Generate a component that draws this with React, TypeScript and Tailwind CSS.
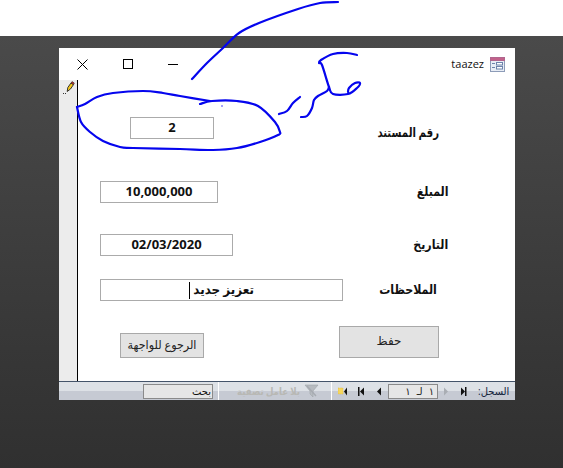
const FONT = "font-['Open_Sans','DejaVu_Sans',sans-serif]"

type Point = [number, number]

// catmull-rom through the hand-read points, keeps the marker strokes soft
const smooth = (pts: Point[]) => {
  let d = `M${pts[0][0]} ${pts[0][1]}`
  for (let i = 0; i < pts.length - 1; i++) {
    const p0 = pts[i - 1] || pts[i]
    const p1 = pts[i]
    const p2 = pts[i + 1]
    const p3 = pts[i + 2] || p2
    const c1x = p1[0] + (p2[0] - p0[0]) / 6
    const c1y = p1[1] + (p2[1] - p0[1]) / 6
    const c2x = p2[0] - (p3[0] - p1[0]) / 6
    const c2y = p2[1] - (p3[1] - p1[1]) / 6
    d += ` C${c1x} ${c1y} ${c2x} ${c2y} ${p2[0]} ${p2[1]}`
  }
  return d
}

const strokes: Point[][] = [
  [[192, 79], [207, 63], [223, 48], [239, 33], [259, 23], [298, 9], [320, 3], [338, 2]],
  [[77, 107], [85, 104], [97, 97], [113, 93], [143, 91], [163, 93], [180, 96], [210, 101]],
  [[200, 104], [212, 101], [237, 101], [258, 106], [275, 122], [280, 132], [278, 135], [260, 142], [237, 148], [213, 150], [180, 149], [133, 148], [120, 147], [103, 141], [90, 132], [81, 122], [77, 107]],
  [[357, 55], [347, 53], [333, 54], [321, 60], [319, 63], [322, 65], [329, 87], [333, 94], [348, 94], [357, 88], [360, 83], [355, 83], [349, 88], [348, 92]],
  [[329, 87], [327, 91], [318, 96], [314, 100], [312, 108], [307, 116], [301, 117]],
  [[300, 97], [293, 103], [287, 111], [279, 114]],
]

const Scribble = () => (
  <svg className="absolute left-0 top-0 pointer-events-none" width="563" height="160" fill="none" stroke="#0505ee" strokeWidth="2.2" strokeLinecap="round" strokeLinejoin="round">
    {strokes.map((s, i) => (
      <path key={i} d={smooth(s)} />
    ))}
    <circle cx="222" cy="106" r="0.7" fill="#0505ee" stroke="none" />
  </svg>
)

const WinClose = () => (
  <svg width="11" height="11" viewBox="0 0 11 11" stroke="#000">
    <path d="M0.5 0.5 L10.5 10.5 M10.5 0.5 L0.5 10.5" />
  </svg>
)

const WinMax = () => (
  <svg width="10" height="10" viewBox="0 0 10 10" fill="none" stroke="#000" shapeRendering="crispEdges">
    <rect x="0.5" y="0.5" width="9" height="9" />
  </svg>
)

const FormIcon = () => (
  <svg width="15" height="15" viewBox="0 0 15 15">
    <rect x="0.5" y="0.5" width="14" height="14" fill="#e8edf5" stroke="#8d9cb8" />
    <rect x="0.5" y="0.5" width="14" height="3" fill="#c2618a" stroke="#b0668e" />
    <path d="M2 6.5h3M2 10.5h3" stroke="#6d83ab" />
    <rect x="6.5" y="5.5" width="6" height="2.5" fill="#fff" stroke="#6d83ab" />
    <rect x="6.5" y="9.5" width="6" height="2.5" fill="#fff" stroke="#6d83ab" />
  </svg>
)

const Pencil = () => (
  <svg width="12" height="13" viewBox="0 0 12 13">
    <path d="M4.2 10.5 L4.8 6.5 L8 2 L10.5 3.6 L7.5 8 Z" fill="#f4c61c" stroke="#222" strokeWidth="0.9" />
    <path d="M8 2 L9 0.6 L11.3 2 L10.5 3.6 Z" fill="#d2302a" stroke="#222" strokeWidth="0.6" />
    <rect x="0" y="12" width="1" height="1" fill="#333" />
    <rect x="2" y="12" width="1" height="1" fill="#333" />
  </svg>
)

type NavProps = { dir: 'left' | 'right'; bar?: boolean; color?: string; className?: string }

const Nav = ({ dir, bar, color = '#111', className }: NavProps) => (
  <svg width="7" height="9" viewBox="0 0 7 9" className={className}>
    {dir === 'right' ? <path d="M1 0.5 L5 4.5 L1 8.5 Z" fill={color} /> : <path d="M6 0.5 L2 4.5 L6 8.5 Z" fill={color} />}
    {bar && <rect x={dir === 'right' ? 5 : 0} y="0" width="1.5" height="9" fill={color} />}
  </svg>
)

const NewIcon = () => (
  <svg width="10" height="9" viewBox="0 0 10 9">
    <rect x="0" y="1" width="5" height="6" fill="#f6d75e" stroke="#e2b93c" strokeWidth="0.6" strokeDasharray="1 0.6" />
    <path d="M9 0.5 L6 4.5 L9 8.5 Z" fill="#111" />
  </svg>
)

const FilterIcon = () => (
  <svg width="15" height="14" viewBox="0 0 15 14">
    <path d="M1 1 H14 L9 7 V13 L6 10 V7 Z" fill="#b7bbc0" stroke="#a0a4aa" strokeWidth="0.6" />
    <path d="M3 2 L12 12" stroke="#a7abb1" strokeWidth="1.4" />
  </svg>
)

type FieldProps = {
  value: string
  label: string
  boxClass: string
  labelClass: string
  rowClass: string
  caret?: boolean
}

const Field = ({ value, label, boxClass, labelClass, rowClass, caret }: FieldProps) => (
  <div className={`flex items-center ${rowClass}`}>
    <div dir={caret ? 'rtl' : undefined} className={`flex h-[22px] items-center justify-center border border-[#ababab] bg-white text-[13px] font-bold text-[#111] ${FONT} ${boxClass}`}>
      <span className={caret ? 'inline-block origin-right scale-x-[0.92]' : undefined}>{value}</span>
      {caret && <span className="-mr-[2px] h-[17px] w-px bg-black" />}
    </div>
    <span dir="rtl" className={`ml-auto inline-block origin-right text-[13px] font-bold text-[#111] ${FONT} ${labelClass}`}>
      {label}
    </span>
  </div>
)

export default function App() {
  return (
    <div className="relative h-[468px] w-[563px] overflow-hidden bg-white">
      <div className="h-9 bg-white" />
      <div className="h-[432px] bg-gradient-to-b from-[#4a4a4a] to-[#303030] pl-[59px] pt-3">
        <div className="flex h-[352px] w-[456px] flex-col bg-white">
          <div className="flex h-8 items-center">
            <span className="ml-[18px]">
              <WinClose />
            </span>
            <span className="ml-[35px]">
              <WinMax />
            </span>
            <span className="ml-[35px] h-px w-[10px] bg-black" />
            <span className={`ml-auto text-[11px] text-[#111] ${FONT}`}>taazez</span>
            <span className="ml-[6px] mr-[10px]">
              <FormIcon />
            </span>
          </div>

          <div className="flex flex-1">
            <div className="w-[19px] border-r border-black bg-[#ececec] pl-[4px] pt-[1px]">
              <Pencil />
            </div>
            <div className="flex-1">
              <Field value="2" label="رقم المستند" rowClass="mt-[37px]" boxClass="ml-[52px] w-[84px]" labelClass="mr-[76px] translate-y-[5px] scale-x-[0.78]" />
              <Field value="10,000,000" label="المبلغ" rowClass="mt-[42px]" boxClass="ml-[22px] w-[118px]" labelClass="mr-[66px] scale-x-[0.85]" />
              <Field value="02/03/2020" label="التاريخ" rowClass="mt-[31px]" boxClass="ml-[22px] w-[133px]" labelClass="mr-[67px] scale-x-[0.85]" />
              <Field value="تعزيز جديد" label="الملاحظات" rowClass="mt-[23px]" boxClass="ml-[22px] w-[243px]" labelClass="mr-[78px] scale-x-[0.85]" caret />
              <div className="mt-[25px] flex items-end">
                <button className={`ml-[42px] h-[25px] w-[84px] border-[1.5px] border-[#a9a9a9] bg-[#e3e3e3] pb-px text-[12px] text-[#222] ${FONT}`}>
                  <span className="inline-block scale-x-[0.93]">الرجوع للواجهة</span>
                </button>
                <button className={`ml-[135px] h-[32px] w-[100px] border-[1.5px] border-[#a9a9a9] bg-[#e3e3e3] pb-[3px] text-[12px] text-[#222] ${FONT}`}>
                  حفظ
                </button>
              </div>
            </div>
          </div>

          <div className="flex h-[19px] items-center border-t border-[#44546a] bg-gradient-to-b from-[#dde1e6] from-50% to-[#c6cad3] to-50%">
            <div dir="rtl" className={`ml-[84px] flex h-[15px] w-[70px] items-center border border-[#8a8a8a] bg-[#e6e6e6] pr-[1px] text-[10px] text-[#111] ${FONT}`}>
              بحث
            </div>
            <span className="ml-[5px] h-full w-px bg-white" />
            <span dir="rtl" className={`ml-[13px] inline-block w-[68px] origin-right scale-x-[0.86] text-[10px] font-bold whitespace-nowrap text-[#b8b8b4] ${FONT}`}>
              بلا عامل تصفية
            </span>
            <span className="ml-[4px]">
              <FilterIcon />
            </span>
            <span className="ml-[12px] h-full w-px bg-white" />
            <span className="ml-[6px]">
              <NewIcon />
            </span>
            <Nav dir="left" bar className="ml-[10px]" />
            <Nav dir="left" className="ml-[10px]" />
            <div dir="rtl" className={`ml-[6px] flex h-[15px] w-[50px] items-center border border-[#8a8a8a] bg-[#e6e6e6] pr-[3px] text-[10px] text-[#222] ${FONT}`}>
              ١ <span className="mx-[6px]">لـ</span> ١
            </div>
            <Nav dir="right" color="#a9adb3" className="ml-[5px]" />
            <Nav dir="right" bar className="ml-[10px]" />
            <span dir="rtl" className={`ml-[11px] text-[10px] whitespace-nowrap text-[#14243c] ${FONT}`}>
              السجل:
            </span>
          </div>
        </div>
      </div>
      <Scribble />
    </div>
  )
}
